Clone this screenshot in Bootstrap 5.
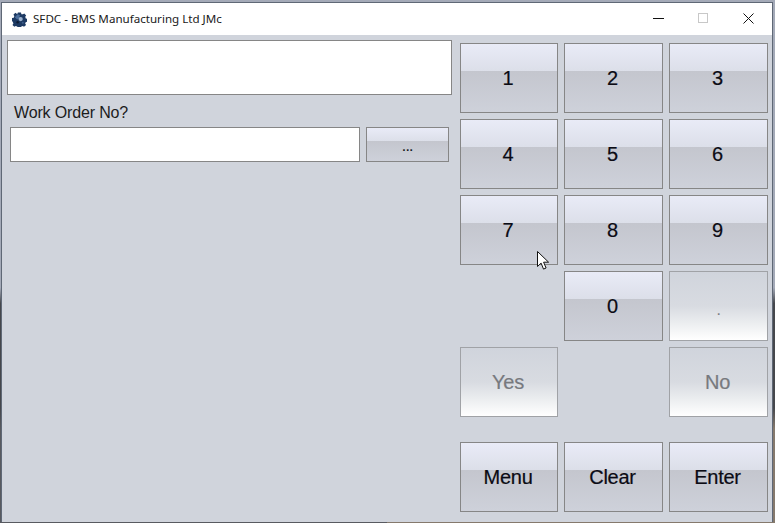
<!DOCTYPE html>
<html lang="en">
<head>
    <meta charset="UTF-8">
    <meta name="viewport" content="width=device-width, initial-scale=1.0">
    <title>SFDC - BMS Manufacturing Ltd JMc</title>
    <link href="https://cdn.jsdelivr.net/npm/bootstrap@5.3.0/dist/css/bootstrap.min.css" rel="stylesheet">
    <style>
        html, body {
            height: 100%;
        }
        body {
            overflow: hidden;
            padding: 2px 2px 1px 1px;
            background:
                linear-gradient(180deg, #a4aab8 0, #a4aab8 55%, #45474c 58%, #45474c 78%, transparent 82%),
                linear-gradient(90deg, #585a60 0, #585a60 50%, #85796c 50%);
            font-family: "Liberation Sans", Arial, sans-serif;
        }
        .app-window {
            width: 772px;
            height: 520px;
            border: 1px solid #5f6876;
            border-bottom-width: 0;
            background: #d0d4dc;
        }
        .title-strip {
            height: 32px;
            background: #fff;
            font-family: "Noto Sans", sans-serif;
            font-size: 11.6px;
            color: #1a1a1a;
            padding: 0 1px 0 10px;
        }
        .app-mark {
            margin-right: 6px;
        }
        .win-ctl {
            width: 45px;
            height: 32px;
            padding-bottom: 2px;
        }
        .app-body {
            padding: 5px 4px 0 5px;
            gap: 8px;
        }
        .left-pane {
            width: 445px;
        }
        .prompt-box {
            height: 55px;
            background: #fff;
            border: 1px solid #868686;
        }
        .prompt-label {
            font-size: 16px;
            line-height: 18px;
            letter-spacing: -0.15px;
            color: #1c1c1c;
            margin: 9px 0 5px 7px;
        }
        .entry-row {
            padding-left: 3px;
            gap: 6px;
            width: 442px;
        }
        .entry-box {
            width: 350px;
            height: 35px;
            background: #fff;
            border: 1px solid #868686;
        }
        .pad-grid {
            display: grid;
            grid-template-columns: 98px 99px 99px;
            grid-template-rows: repeat(5, 70px) 89px;
            gap: 6px;
            margin-top: 3px;
        }
        .pad-btn {
            display: flex;
            align-items: center;
            justify-content: center;
            padding: 0 2px 0 0;
            border: 1px solid #868686;
            border-radius: 0;
            font-family: "Liberation Sans", Arial, sans-serif;
            font-size: 20px;
            letter-spacing: -0.25px;
            -webkit-text-stroke: 0.2px currentColor;
            color: #0b0b14;
            background: linear-gradient(180deg, #e9ebf7 0, #dcdfe9 39.5%, #c4c6ce 40%, #ced1da 100%);
        }
        .pad-btn:disabled {
            opacity: 1;
            color: #77797e;
            border-color: #a0a2a6;
            background: linear-gradient(180deg, #d0d4dc 0, #d8dbe1 50%, #eceef0 76%, #ffffff 100%);
        }
        .dots-btn {
            width: 83px;
            height: 35px;
            font-size: 14px;
            padding: 3px 0 0;
        }
        .point-btn {
            font-size: 14px;
            padding: 8px 0 0;
        }
        .menu-row {
            margin-top: 19px;
        }
        .cursor-mark {
            position: absolute;
            left: 537px;
            top: 251px;
        }
    </style>
</head>
<body>
    <div class="app-window d-flex flex-column">
        <!-- title bar -->
        <div class="title-strip d-flex align-items-center">
            <svg class="app-mark" width="15" height="15" viewBox="0 0 16 16">
                <path fill="#1d3a63" d="M6 .5h3.600l.4 1.800 1.700.2 1.400-1 2 2.200-1 1.300.6 1.800 1.800.6v3l-1.900.4-.6 1.500 1 1.600-2.200 1.900-1.300-1-1.600.7-.4 1.900H6l-.4-1.900-1.700-.7-1.400 1-2-2 1-1.500-.6-1.600L0 9.500v-3l1.900-.5.6-1.800-1-1.300 2.100-2 1.300 1 1.700-.6z"/>
                <path fill="#4a6d9b" d="M3 5.500l3-3 2.500 1-1 3-2 1.500z"/>
                <circle cx="9.200" cy="7.500" r="2.300" fill="#9db3cf"/>
                <circle cx="6" cy="11" r="1.300" fill="#0e1c33"/>
                <circle cx="11.500" cy="11.500" r="1.100" fill="#3d5f8c"/>
            </svg>
            <span class="flex-grow-1">SFDC - BMS Manufacturing Ltd JMc</span>
            <div class="win-ctl d-flex align-items-center justify-content-center">
                <svg width="11" height="11" viewBox="0 0 11 11"><path d="M0 5.500h11" stroke="#111" fill="none"/></svg>
            </div>
            <div class="win-ctl d-flex align-items-center justify-content-center">
                <svg width="11" height="11" viewBox="0 0 11 11"><rect x=".5" y=".5" width="9" height="9" stroke="#c8c8c8" fill="none"/></svg>
            </div>
            <div class="win-ctl d-flex align-items-center justify-content-center">
                <svg width="11" height="11" viewBox="0 0 11 11"><path d="M.5.5l10 10M10.500.5l-10 10" stroke="#111" fill="none"/></svg>
            </div>
        </div>

        <div class="app-body d-flex flex-grow-1">
            <!-- work order entry -->
            <div class="left-pane">
                <div class="prompt-box"></div>
                <div class="prompt-label">Work Order No?</div>
                <div class="entry-row d-flex">
                    <div class="entry-box"></div>
                    <button class="btn pad-btn dots-btn" type="button">...</button>
                </div>
            </div>

            <!-- keypad -->
            <div class="pad-grid">
                <button class="btn pad-btn" type="button">1</button>
                <button class="btn pad-btn" type="button">2</button>
                <button class="btn pad-btn" type="button">3</button>
                <button class="btn pad-btn" type="button">4</button>
                <button class="btn pad-btn" type="button">5</button>
                <button class="btn pad-btn" type="button">6</button>
                <button class="btn pad-btn" type="button">7</button>
                <button class="btn pad-btn" type="button">8</button>
                <button class="btn pad-btn" type="button">9</button>
                <div></div>
                <button class="btn pad-btn" type="button">0</button>
                <button class="btn pad-btn point-btn" type="button" disabled>.</button>
                <button class="btn pad-btn" type="button" disabled>Yes</button>
                <div></div>
                <button class="btn pad-btn" type="button" disabled>No</button>
                <button class="btn pad-btn menu-row" type="button">Menu</button>
                <button class="btn pad-btn menu-row" type="button">Clear</button>
                <button class="btn pad-btn menu-row" type="button">Enter</button>
            </div>
        </div>
    </div>

    <svg class="cursor-mark" width="14" height="20" viewBox="0 0 14 20">
        <path d="M.5.5v15l3.600-3.400 2.400 6 2.600-1.100-2.500-5.800h5z" fill="#fff" stroke="#111" stroke-linejoin="round"/>
    </svg>
</body>
</html>
